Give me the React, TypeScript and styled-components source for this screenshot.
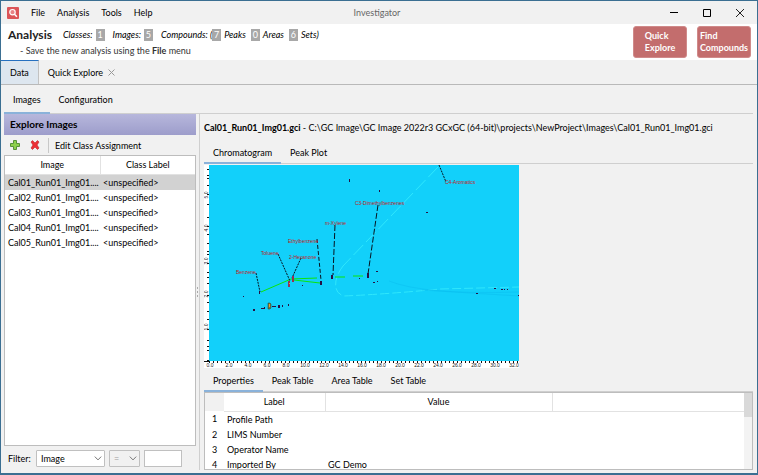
import React from "react";
import styled, { createGlobalStyle } from "styled-components";

const GlobalStyle = createGlobalStyle`
  * { box-sizing: border-box; }
  body {
    margin: 0;
    background: #f1f1f1;
    color: #000;
    font: 9px/15px Lato, "Open Sans", sans-serif;
  }
  button, input, select { font: inherit; color: inherit; }
  table { border-collapse: collapse; table-layout: fixed; width: 100%; }
`;

const Window = styled.div`
  display: flex;
  flex-direction: column;
  height: 100vh;
  overflow: hidden;
  background: #f1f1f1;
  border: 1px solid #3b6f92;
  border-bottom-width: 2px;
`;

const PlainButton = styled.button`
  border: 0;
  padding: 0;
  background: none;
  white-space: nowrap;
`;

const TitleBar = styled.header`
  flex: none;
  display: grid;
  grid-template-columns: 1fr auto 1fr;
  align-items: center;
  height: 23px;
  padding: 0 10px 0 6px;
`;

const Menu = styled.nav`
  display: flex;
  align-items: center;
  gap: 12px;
`;

const Logo = styled.svg`
  width: 12px;
  height: 12px;
  display: block;
`;

const Title = styled.span`
  color: #666;
`;

const WindowControls = styled.div`
  display: flex;
  justify-content: flex-end;
  gap: 20px;
  button { width: 13px; height: 13px; }
  svg { display: block; }
`;

const Banner = styled.section`
  flex: none;
  display: flex;
  justify-content: space-between;
  height: 36px;
  padding: 2px 6px 0 7px;
  background: #fff;
`;

const Summary = styled.div`
  display: flex;
  align-items: center;
  height: 17px;
  font-style: italic;
  white-space: pre;
`;

const Heading = styled.h1`
  margin: 0 11px 0 0;
  font-size: 12px;
  font-style: normal;
  color: #222;
`;

const Count = styled.span<{ $tight?: boolean }>`
  width: 9px;
  height: 12px;
  margin: 0 3px 0 ${(p) => (p.$tight ? 0 : 3)}px;
  background: #a8a8a8;
  color: #fff;
  font-style: normal;
  line-height: 12px;
  text-align: center;
`;

const Gap = styled.span<{ $small?: boolean }>`
  width: ${(p) => (p.$small ? 2 : 5)}px;
`;

const Hint = styled.p`
  margin: 0 0 0 12px;
  color: #333;
`;

const Actions = styled.div`
  display: flex;
  gap: 10px;
`;

const ActionButton = styled.button`
  display: grid;
  place-content: center;
  width: 54px;
  height: 32px;
  padding: 0;
  border: 1px solid #d08a8a;
  border-radius: 3px;
  background: #c36d6d;
  color: #fff;
  font-size: 9px;
  font-weight: 700;
  line-height: 12px;
  text-align: left;
`;

const MainTabs = styled.div`
  flex: none;
  display: flex;
  height: 25px;
  border-bottom: 1px solid #b9b9b9;
`;

const MainTab = styled(PlainButton)<{ $active?: boolean }>`
  display: flex;
  align-items: center;
  gap: 5px;
  padding: 0 9px;
  border-top: 1px solid ${(p) => (p.$active ? "#2670c0" : "transparent")};
  border-right: ${(p) => (p.$active ? "1px solid #c2c2c2" : "0")};
  background: ${(p) => (p.$active ? "#dde6ef" : "none")};
  svg { display: block; }
`;

const Tabs = styled.div<{ $tall?: boolean }>`
  flex: none;
  display: flex;
  height: ${(p) => (p.$tall ? 29 : 23)}px;
  border-bottom: 1px solid #cfcfcf;
`;

const Tab = styled(PlainButton)<{ $active?: boolean }>`
  position: relative;
  padding: 0 9px;
  &::after {
    content: "";
    position: absolute;
    inset: auto 0 -1px;
    height: 2px;
    background: ${(p) => (p.$active ? "#8ab2da" : "transparent")};
  }
`;

const Body = styled.main`
  flex: 1;
  min-height: 0;
  display: flex;
  flex-direction: column;
  padding: 0 4px 3px 3px;
`;

const Panes = styled.div`
  flex: 1;
  min-height: 0;
  display: flex;
`;

const Sidebar = styled.aside`
  flex: none;
  display: flex;
  flex-direction: column;
  width: 192px;
`;

const Splitter = styled.div`
  flex: none;
  display: grid;
  place-items: center start;
  width: 8px;
  border-right: 4px solid #f1f1f1;
  box-shadow: inset -1px 0 #cfcfcf;
`;

const PanelTitle = styled.h2`
  flex: none;
  margin: 0;
  padding: 0 6px;
  background: linear-gradient(#b7b7dc, #9d9dcb);
  font-size: 10px;
  line-height: 21px;
`;

const Toolbar = styled.div`
  flex: none;
  display: flex;
  align-items: center;
  height: 20px;
  padding: 0 6px;
  gap: 10px;
  svg { display: block; }
`;

const Divider = styled.span`
  width: 1px;
  height: 15px;
  margin: 0 -4px 0 -2px;
  background: #c8c8c8;
`;

const Grid = styled.div`
  flex: 1;
  min-height: 0;
  display: flex;
  overflow: hidden;
  border: 1px solid #bdbdbd;
  background: #fff;
`;

const TableArea = styled.div`
  flex: 1;
  min-width: 0;
`;

const HeadCell = styled.th`
  height: 18px;
  padding: 0;
  border-bottom: 1px solid #e2e2e2;
  border-right: 1px solid #e2e2e2;
  font-weight: 400;
  &:last-child { border-right: 0; }
`;

const CornerCell = styled.td`
  background: #f1f1f1;
`;

const Row = styled.tr<{ $selected?: boolean }>`
  background: ${(p) => (p.$selected ? "#d2d2d2" : "none")};
`;

const Cell = styled.td`
  height: 15px;
  padding: 0 0 0 3px;
  white-space: nowrap;
`;

const NumberCell = styled(Cell)`
  padding: 0;
  text-align: center;
`;

const FilterBar = styled.form`
  flex: none;
  display: flex;
  align-items: center;
  gap: 4px;
  height: 24px;
  padding: 1px 0 0 4px;
  label { width: 24px; }
`;

const SelectWrap = styled.span<{ $muted?: boolean }>`
  position: relative;
  display: flex;
  width: ${(p) => (p.$muted ? 31 : 69)}px;
  color: ${(p) => (p.$muted ? "#9a9a9a" : "#000")};
  svg {
    position: absolute;
    right: 3px;
    top: 6px;
    pointer-events: none;
  }
`;

const Select = styled.select`
  appearance: none;
  width: 100%;
  height: 17px;
  padding: 0 4px;
  border: 1px solid #c0c0c0;
  border-radius: 1px;
  background: #fff;
  line-height: 15px;
  &:disabled { background: #f1f1f1; opacity: 1; }
`;

const FilterInput = styled.input`
  width: 38px;
  height: 17px;
  padding: 0 3px;
  border: 1px solid #c0c0c0;
  background: #fff;
`;

const Detail = styled.section`
  flex: 1;
  min-width: 0;
  display: flex;
  flex-direction: column;
`;

const PathLine = styled.p`
  flex: none;
  margin: 0;
  line-height: 27px;
  white-space: nowrap;
`;

const Chart = styled.svg`
  flex: none;
  display: block;
  width: 315px;
  height: 204px;
  margin-top: 1px;
`;

const ScrollTrack = styled.div`
  flex: none;
  width: 8px;
  background: #f3f3f3;
`;

const ScrollThumb = styled.div`
  height: 24px;
  background: #d9d9d9;
`;

const Chevron = () => (
  <svg width="8" height="5" viewBox="0 0 8 5" fill="none" stroke="#777">
    <path d="M.8.6 4 3.9 7.2.6" />
  </svg>
);

const xLabels = Array.from({ length: 17 }, (_, i) => i);
const xTicks = Array.from({ length: 78 }, (_, i) => i);
const yTicks = [4, 10, 13, 20, 29, 39, 52, 61, 69, 78, 86, 89, 98, 107, 112, 118, 130, 137, 146, 154, 164, 175, 181, 185, 195];

const labels: [string, number, number][] = [
  ["C4-Aromatics", 241, 19],
  ["C3-Dimethylbenzenes", 151, 40],
  ["m-Xylene", 121, 60],
  ["Ethylbenzene", 84, 78],
  ["Toluene", 57, 90],
  ["2-Hexanone", 85, 94],
  ["Benzene", 32, 109],
];

function Chromatogram() {
  return (
    <Chart viewBox="0 0 315 204" role="img" aria-label="Chromatogram">
      <rect width="315" height="203" fill="#fff" />
      <rect x="5" width="310" height="196" fill="#12d0fa" />
      <g fill="none" stroke="#3ff4ff" opacity=".65">
        <path d="M234 2 139 101" strokeDasharray="14 4" />
        <path d="M139 101q-9 12-7 22 1 6 8 8 45-2 96-7l79-2" strokeDasharray="9 3" />
      </g>
      <path d="M185 116q35 14 130 11M218 125l97 6" fill="none" stroke="#09bdf0" opacity=".5" />
      <g fill="none" stroke="#0be60b">
        <path d="M57 127 87 114l26-1M90 115l26 3M131 112h10M149 111h10" />
      </g>
      <g fill="none" stroke="#061522" strokeDasharray="2 1">
        <path d="m235 0 7 17M52 108l4 19M74 89l12 27M97 93l-9 20" />
        <path d="m113 74 4 41" strokeDasharray="4 2" />
        <path d="m131 60-2 50M174 40l-10 69" strokeDasharray="6 2" />
      </g>
      <g fontFamily="Liberation Sans, sans-serif" fontSize="5" fill="#c51919">
        {labels.map(([text, x, y]) => (
          <text key={text} x={x} y={y}>{text}</text>
        ))}
      </g>
      <g fill="#271044">
        <path d="M116 116h2v4h-2zM127 110h2v4h-2zM163 108h2v5h-2zM55 126h1v3h-1zM49 144h2v2h-2zM60 142h1v2h-1zM74 140h2v3h-2zM78 140h1v2h-1zM84 139h1v2h-1zM57 143h3v1h-3zM68 141h4v1h-4z" />
        <path d="M145 14h1v3h-1zM175 25h1v2h-1zM222 47h2v1h-2zM39 131h1v1h-1zM98 120h1v1h-1zM155 113h1v1h-1zM172 106h2v1h-2zM169 117h2v1h-2zM173 116h1v1h-1zM272 128h2v1h-2zM290 123h2v1h-2zM297 124h2v1h-2zM300 124h1v1h-1zM303 124h1v1h-1zM314 130h1v1h-1z" />
      </g>
      <path d="M84 116h2v6h-2zM88 111h2v6h-2z" fill="#963055" />
      <path d="M64 138h2l1 1v4l-1 1h-2z" fill="#77763f" stroke="#19433d" strokeWidth=".5" />
      <path d="M85 118h1v1h-1zM65 139h1v3h-1z" fill="#e9a032" />
      <g stroke="#111">
        {yTicks.map((y) => (
          <path key={y} d={`M3 ${y}.5h2`} />
        ))}
        <path d="M0 196.500h5" />
        {xTicks.map((i) => (
          <path key={i} d={`M${5 + i * 4}.5 196v2`} />
        ))}
      </g>
      <g fontFamily="Liberation Sans, sans-serif" fontSize="5" fill="#222" textAnchor="middle">
        {xLabels.map((i) => (
          <text key={i} x={6 + i * 19} y="202">{i * 2}.0</text>
        ))}
        {[1, 2, 3, 4, 5].map((n) => (
          <text key={n} transform={`translate(4 ${195 - n * 33}) rotate(-90)`}>{n}.0</text>
        ))}
      </g>
    </Chart>
  );
}

const images = ["Cal01", "Cal02", "Cal03", "Cal04", "Cal05"];
const properties = [
  ["Profile Path", ""],
  ["LIMS Number", ""],
  ["Operator Name", ""],
  ["Imported By", "GC Demo"],
];

function TabStrip({ items, tall }: { items: string[]; tall?: boolean }) {
  return (
    <Tabs role="tablist" $tall={tall}>
      {items.map((item, i) => (
        <Tab key={item} role="tab" aria-selected={i === 0} $active={i === 0}>
          {item}
        </Tab>
      ))}
    </Tabs>
  );
}

export default function App() {
  return (
    <>
      <GlobalStyle />
      <Window>
        <TitleBar>
          <Menu>
            <Logo viewBox="0 0 12 12">
              <rect width="12" height="12" rx="1" fill="#dc5558" />
              <circle cx="5.5" cy="5.2" r="2.7" fill="#e98386" stroke="#fff" strokeWidth="1.2" />
              <path d="m7.5 7.3 2.4 2.5" stroke="#fff" strokeWidth="1.5" />
            </Logo>
            <PlainButton>File</PlainButton>
            <PlainButton>Analysis</PlainButton>
            <PlainButton>Tools</PlainButton>
            <PlainButton>Help</PlainButton>
          </Menu>
          <Title>Investigator</Title>
          <WindowControls>
            <PlainButton aria-label="Minimize">
              <svg width="13" height="13"><path d="M2 6.5h8" stroke="#000" /></svg>
            </PlainButton>
            <PlainButton aria-label="Maximize">
              <svg width="13" height="13"><path d="M2.5 3.5h7v7h-7z" fill="none" stroke="#000" /></svg>
            </PlainButton>
            <PlainButton aria-label="Close">
              <svg width="13" height="13"><path d="m2 3 8 8m0-8-8 8" stroke="#222" /></svg>
            </PlainButton>
          </WindowControls>
        </TitleBar>

        <Banner>
          <div>
            <Summary>
              <Heading>Analysis</Heading>
              Classes:<Count>1</Count><Gap />
              Images:<Count>5</Count><Gap />
              Compounds: (<Count $tight>7</Count>Peaks<Gap $small /><Count>0</Count>Areas<Gap $small /><Count>6</Count>Sets)
            </Summary>
            <Hint>- Save the new analysis using the <b>File</b> menu</Hint>
          </div>
          <Actions>
            <ActionButton>Quick<br />Explore</ActionButton>
            <ActionButton>Find<br />Compounds</ActionButton>
          </Actions>
        </Banner>

        <MainTabs role="tablist">
          <MainTab role="tab" aria-selected $active>Data</MainTab>
          <MainTab role="tab" aria-selected={false}>
            Quick Explore
            <svg width="7" height="7"><path d="m.5.5 6 6m0-6-6 6" stroke="#999" /></svg>
          </MainTab>
        </MainTabs>

        <Body>
          <TabStrip items={["Images", "Configuration"]} tall />
          <Panes>
            <Sidebar>
              <PanelTitle>Explore Images</PanelTitle>
              <Toolbar>
                <PlainButton aria-label="Add image">
                  <svg width="10" height="10"><path d="M3.5.5h3v3h3v3h-3v3h-3v-3h-3v-3h3z" fill="#8ed04c" stroke="#57923a" /></svg>
                </PlainButton>
                <PlainButton aria-label="Remove image">
                  <svg width="10" height="10"><path d="m1 2 1.500-1.500L5 3 7.500.5 9 2 7 5l2 3-1.500 1.500L5 7 2.500 9.500 1 8l2-3z" fill="#ed2f35" stroke="#bd2028" strokeWidth=".6" /></svg>
                </PlainButton>
                <Divider />
                <PlainButton>Edit Class Assignment</PlainButton>
              </Toolbar>
              <Grid>
                <TableArea>
                  <table>
                    <thead>
                      <tr><HeadCell>Image</HeadCell><HeadCell>Class Label</HeadCell></tr>
                    </thead>
                    <tbody>
                      {images.map((name, i) => (
                        <Row key={name} $selected={i === 0}>
                          <Cell>{name}_Run01_Img01....</Cell>
                          <Cell>&lt;unspecified&gt;</Cell>
                        </Row>
                      ))}
                    </tbody>
                  </table>
                </TableArea>
              </Grid>
              <FilterBar>
                <label htmlFor="field">Filter:</label>
                <SelectWrap>
                  <Select id="field"><option>Image</option></Select>
                  <Chevron />
                </SelectWrap>
                <SelectWrap $muted>
                  <Select aria-label="Operator" disabled><option>=</option></Select>
                  <Chevron />
                </SelectWrap>
                <FilterInput aria-label="Filter value" />
              </FilterBar>
            </Sidebar>
            <Splitter>
              <svg width="3" height="10" fill="#aaa"><path d="M1 0h1v2H1zM1 4h1v2H1zM1 8h1v2H1z" /></svg>
            </Splitter>
            <Detail>
              <PathLine>
                <b>Cal01_Run01_Img01.gci</b> - C:\GC Image\GC Image 2022r3 GCxGC (64-bit)\projects\NewProject\Images\Cal01_Run01_Img01.gci
              </PathLine>
              <TabStrip items={["Chromatogram", "Peak Plot"]} />
              <Chromatogram />
              <TabStrip items={["Properties", "Peak Table", "Area Table", "Set Table"]} />
              <Grid>
                <TableArea>
                  <table>
                    <colgroup>
                      <col width="19" />
                      <col width="101" />
                      <col width="227" />
                      <col />
                    </colgroup>
                    <thead>
                      <tr><CornerCell /><HeadCell>Label</HeadCell><HeadCell>Value</HeadCell><HeadCell /></tr>
                    </thead>
                    <tbody>
                      {properties.map(([label, value], i) => (
                        <Row key={label}>
                          <NumberCell>{i + 1}</NumberCell>
                          <Cell>{label}</Cell>
                          <Cell>{value}</Cell>
                          <Cell />
                        </Row>
                      ))}
                    </tbody>
                  </table>
                </TableArea>
                <ScrollTrack><ScrollThumb /></ScrollTrack>
              </Grid>
            </Detail>
          </Panes>
        </Body>
      </Window>
    </>
  );
}
